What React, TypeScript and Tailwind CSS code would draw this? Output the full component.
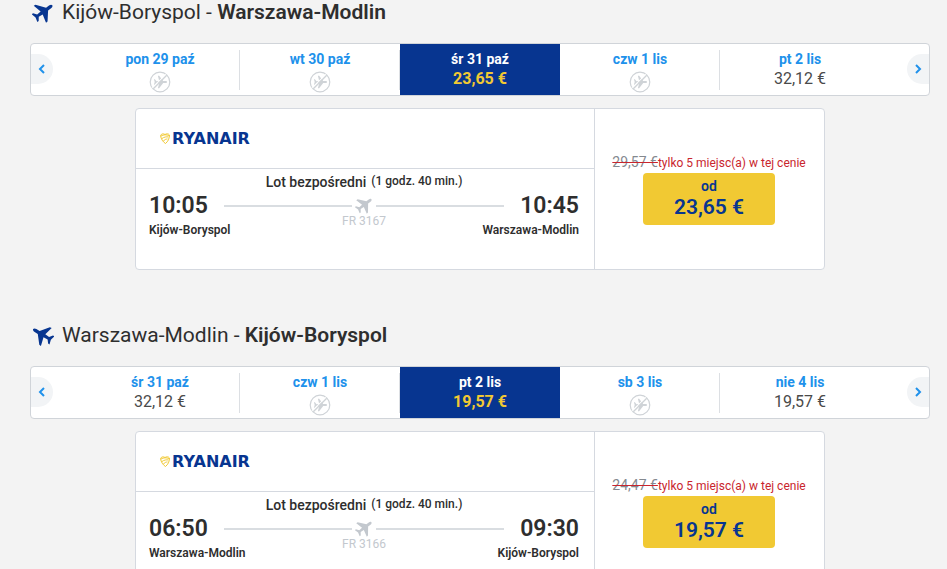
import clsx from "clsx";

type Day = { label: string; price?: string; active?: boolean };

type Trip = {
  from: string;
  to: string;
  inbound?: boolean;
  days: Day[];
  departure: string;
  arrival: string;
  flight: string;
  oldPrice: string;
  price: string;
};

const trips: Trip[] = [
  {
    from: "Kijów-Boryspol",
    to: "Warszawa-Modlin",
    days: [
      { label: "pon 29 paź" },
      { label: "wt 30 paź" },
      { label: "śr 31 paź", price: "23,65 €", active: true },
      { label: "czw 1 lis" },
      { label: "pt 2 lis", price: "32,12 €" },
    ],
    departure: "10:05",
    arrival: "10:45",
    flight: "FR 3167",
    oldPrice: "29,57 €",
    price: "23,65 €",
  },
  {
    from: "Warszawa-Modlin",
    to: "Kijów-Boryspol",
    inbound: true,
    days: [
      { label: "śr 31 paź", price: "32,12 €" },
      { label: "czw 1 lis" },
      { label: "pt 2 lis", price: "19,57 €", active: true },
      { label: "sb 3 lis" },
      { label: "nie 4 lis", price: "19,57 €" },
    ],
    departure: "06:50",
    arrival: "09:30",
    flight: "FR 3166",
    oldPrice: "24,47 €",
    price: "19,57 €",
  },
];

// nose points right, rotated where it is drawn
const PLANE =
  "M24.500 12c0-1.200-1.500-1.900-3-1.900h-4L10 .8 7.800.6l2.400 9.500-5 .4L2.400 6.800H.6L2 12 .6 17.200h1.800l2.800-3.700 5 .4-2.400 9.500 2.200-.2 7.500-9.300h4c1.500 0 3-.7 3-1.900z";

function Plane({ className, angle }: { className?: string; angle: number }) {
  return (
    <svg viewBox="0 0 24 24" className={className} fill="currentColor" aria-hidden="true">
      <path d={PLANE} transform={`rotate(${angle} 12 12)`} />
    </svg>
  );
}

function NoFlight() {
  return (
    <svg viewBox="0 0 22 22" className="mt-0.5 h-[22px] w-[22px] text-[#cfd3d7]" role="img" aria-label="Brak lotów">
      <circle cx="11" cy="11" r="9.800" fill="none" stroke="currentColor" strokeWidth="1.200" />
      <path d={PLANE} fill="currentColor" transform="translate(4.600 4.400) scale(.55)" />
      <path d="M4.300 17.700 17.700 4.300" stroke="#fff" strokeWidth="1.200" transform="translate(-.9 -.9)" />
      <path d="M4.300 17.700 17.700 4.300" stroke="currentColor" strokeWidth="1.300" />
    </svg>
  );
}

function Chevron({ flip }: { flip?: boolean }) {
  return (
    <svg viewBox="0 0 8 10" className="h-2.5 w-2" fill="none" stroke="currentColor" strokeWidth="2" aria-hidden="true">
      <path d={flip ? "M2 1l4 4-4 4" : "M6 1L2 5l4 4"} />
    </svg>
  );
}

function Logo() {
  return (
    <div className="flex items-center gap-0.5 text-[#073590]">
      <svg viewBox="0 0 20 22" className="h-[11px] w-2.5" fill="none" stroke="#f1c933" strokeWidth="2" aria-hidden="true">
        <path d="M1 5C3 1 7 1 10 3c3-2 7-2 9 1 0 7-3 13-8 17C6 18 2 12 1 5z" />
        <path d="M2 6c5-3 11-3 16-1M4 11c4-3 9-4 13-3M7 16c2-3 5-4 8-4" />
      </svg>
      <span className="font-['DejaVu_Sans'] text-base leading-4 font-bold">RYANAIR</span>
    </div>
  );
}

function DayStrip({ days }: { days: Day[] }) {
  return (
    <div className="mt-[19px] flex h-[53px] overflow-hidden rounded border border-[#d0d4d9] bg-white">
      <div className="w-[49px] shrink-0 pt-2.5">
        <button aria-label="Poprzednie dni" className="flex h-[30px] w-[22px] items-center justify-center rounded-r-full bg-[#f2f4f6] text-[#2091eb]">
          <Chevron />
        </button>
      </div>
      {days.map((day, i) => (
        <button
          key={day.label}
          className={clsx(
            "relative flex h-full flex-1 flex-col items-center pt-[5px]",
            day.active ? "bg-[#073590] text-white" : "text-[#2091eb]"
          )}
        >
          <span className="text-sm leading-5 font-bold">{day.label}</span>
          {day.price ? (
            <span className={clsx("text-base leading-5", day.active ? "font-bold text-[#f1c933]" : "font-normal text-[#4a4a4a]")}>
              {day.price}
            </span>
          ) : (
            <NoFlight />
          )}
          {i < days.length - 1 && !day.active && (
            <span className="absolute top-1.5 right-0 h-10 w-px bg-[#dcdfe3]" />
          )}
        </button>
      ))}
      <div className="flex w-[49px] shrink-0 justify-end pt-2.5">
        <button aria-label="Następne dni" className="flex h-[30px] w-[22px] items-center justify-center rounded-l-full bg-[#f2f4f6] text-[#2091eb]">
          <Chevron flip />
        </button>
      </div>
    </div>
  );
}

function FlightCard({ trip }: { trip: Trip }) {
  return (
    <div className="mx-auto mt-3 flex min-h-[162px] max-w-[690px] rounded border border-[#d5d9e0] bg-white">
      <div className="flex-1">
        <div className="flex h-[60px] items-center border-b border-[#d5d9e0] pl-6">
          <Logo />
        </div>
        <div className="pt-[3px] pr-[15px] pl-[13px] font-semibold">
          <div className="flex justify-center gap-[5px]">
            <span className="text-sm leading-5 font-medium">Lot bezpośredni</span>
            <span className="text-xs leading-[18px] font-medium">(1 godz. 40 min.)</span>
          </div>
          <div className="flex">
            <div className="flex w-[75px] flex-col gap-0.5 whitespace-nowrap">
              <span className="text-[23px] leading-7">{trip.departure}</span>
              <span className="text-xs">{trip.from}</span>
            </div>
            <div className="flex-1 pt-1 text-[#c3c8ce]">
              <div className="flex h-5 items-center gap-[3px]">
                <span className="h-0.5 flex-1 bg-[#d9dde1]" />
                <Plane angle={-38} className="mb-0.5 h-[18px] w-[18px]" />
                <span className="h-0.5 flex-1 bg-[#d9dde1]" />
              </div>
              <div className="text-center text-xs leading-[10px] font-normal">{trip.flight}</div>
            </div>
            <div className="flex w-[75px] flex-col items-end gap-0.5 whitespace-nowrap">
              <span className="text-[23px] leading-7">{trip.arrival}</span>
              <span className="text-xs">{trip.to}</span>
            </div>
          </div>
        </div>
      </div>
      <div className="flex w-[230px] flex-col items-center justify-center border-l border-[#d5d9e0] pr-px pb-0.5">
        <p className="text-xs leading-5 whitespace-nowrap text-[#c9252d]">
          <s className="text-sm leading-5 text-[#84898f] decoration-[#c9252d]">{trip.oldPrice}</s>
          tylko 5 miejsc(a) w tej cenie
        </p>
        <button className="flex h-[52px] w-[132px] flex-col items-center rounded bg-[#f1c933] pt-1 font-semibold text-[#073590]">
          <span className="text-sm leading-[18px]">od</span>
          <span className="text-[21px] leading-6">{trip.price}</span>
        </button>
      </div>
    </div>
  );
}

export default function App() {
  return (
    <main className="flex min-h-screen flex-col gap-[53px] bg-[#f3f3f3] pr-[17px] pl-[30px] font-[Roboto,sans-serif] text-[#2e2e2e]">
      {trips.map((trip) => (
        <section key={trip.flight}>
          <h2 className="flex h-6 items-center gap-2 pl-0.5 text-[21px] leading-6">
            <Plane angle={trip.inbound ? 211 : -36} className="h-[22px] w-[22px] text-[#073590]" />
            <span>
              {trip.from} - <b className="font-semibold">{trip.to}</b>
            </span>
          </h2>
          <DayStrip days={trip.days} />
          <FlightCard trip={trip} />
        </section>
      ))}
    </main>
  );
}
